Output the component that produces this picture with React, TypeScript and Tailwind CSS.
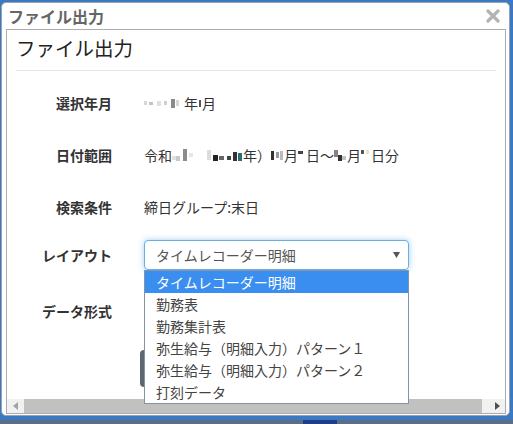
import React from "react";

const B = ({ cls }: { cls: string }) => <span className={"inline-block align-middle " + cls} />;

const items = [
  "タイムレコーダー明細",
  "勤務表",
  "勤務集計表",
  "弥生給与（明細入力）パターン１",
  "弥生給与（明細入力）パターン２",
  "打刻データ",
];

export default function App() {
  return (
    <div className="relative w-[513px] h-[424px] overflow-hidden bg-[#3d79c2] font-['Noto_Sans_CJK_JP','Noto_Sans',sans-serif]">
      {/* bottom darker strip */}
      <div className="absolute left-0 bottom-0 w-[513px] h-[4px] bg-[#5a6f86]">
        <div className="ml-[303px] w-[34px] h-[4px] bg-[#1f3f86]" />
      </div>
      {/* window */}
      <div className="absolute left-[1px] top-[2px] w-[509px] h-[414px] rounded-[5px] bg-white border border-[#9aa3ad] flex flex-col">
        {/* title bar */}
        <div className="h-[26px] flex items-center justify-between pl-[6px] pr-[9px]">
          <span className="text-[16px] font-bold text-[#666] leading-[20px]">ファイル出力</span>
          <svg width="14" height="14" viewBox="0 0 14 14">
            <path d="M2 2 L12 12 M12 2 L2 12" stroke="#b3b3b3" strokeWidth="3.2" strokeLinecap="round" />
          </svg>
        </div>
        {/* inner panel */}
        <div className="ml-[4px] mr-[3px] h-[385px] border border-[#acacac] flex flex-col">
          <div className="flex-1 relative">
            {/* header */}
            <div className="mx-[9px] pt-[5px] pb-[9px] border-b border-[#e5e5e5]">
              <div className="text-[19.5px] leading-[26px] text-[#222]">ファイル出力</div>
            </div>
            {/* body */}
            <div className="pt-[6px] text-[14px] text-[#333]">
              <div className="h-[52px] flex items-center">
                <div className="w-[105px] text-right font-bold">選択年月</div>
                <div className="ml-[32px] flex items-center">
                  <B cls="w-[3px] h-[4px] bg-[#d8d8d8] mr-[2px]" />
                  <B cls="w-[4px] h-[3px] bg-[#c4c4c4] mr-[4px]" />
                  <B cls="w-[4px] h-[5px] bg-[#e0e0e0] mr-[3px]" />
                  <B cls="w-[3px] h-[4px] bg-[#d0d0d0] mr-[4px]" />
                  <B cls="w-[4px] h-[9px] bg-[#8a8a8a] mr-[1px]" />
                  <B cls="w-[3px] h-[6px] bg-[#d6d6d6] mr-[5px]" />
                  <span>年</span>
                  <B cls="w-[2px] h-[7px] bg-[#555] mx-[1px]" />
                  <span>月</span>
                </div>
              </div>
              <div className="h-[52px] flex items-center">
                <div className="w-[105px] text-right font-bold">日付範囲</div>
                <div className="ml-[32px] flex items-center whitespace-nowrap">
                  <span>令和</span>
                  <B cls="w-[4px] h-[4px] bg-[#e0e0e0] mt-[6px]" />
                  <B cls="w-[4px] h-[5px] bg-[#c9c9c9] mt-[6px] mr-[3px]" />
                  <B cls="w-[4px] h-[12px] bg-[#8c8c8c] mr-[2px]" />
                  <B cls="w-[4px] h-[4px] bg-[#e6e6e6] mr-[14px]" />
                  <B cls="w-[4px] h-[10px] bg-[#dcdcdc] mr-[2px]" />
                  <B cls="w-[5px] h-[6px] bg-[#222] mt-[5px] mr-[1px]" />
                  <B cls="w-[5px] h-[4px] bg-[#666] mt-[6px] mr-[3px]" />
                  <B cls="w-[4px] h-[4px] bg-[#444] mt-[6px] mr-[2px]" />
                  <B cls="w-[4px] h-[9px] bg-[#333] mt-[2px] mr-[1px]" />
                  <B cls="w-[4px] h-[8px] bg-[#2d6e70] mt-[3px] mr-[1px]" />
                  <span>年）</span>
                  <B cls="w-[3px] h-[9px] bg-[#333] mr-[2px]" />
                  <B cls="w-[3px] h-[6px] bg-[#9a9a9a] mr-[1px]" />
                  <B cls="w-[3px] h-[9px] bg-[#bbb] mr-[1px]" />
                  <span>月</span>
                  <B cls="w-[5px] h-[3px] bg-[#444] mb-[6px] mr-[3px]" />
                  <span>日～</span>
                  <B cls="w-[4px] h-[7px] bg-[#8a7f86] mb-[3px]" />
                  <B cls="w-[4px] h-[6px] bg-[#3a3034] mt-[6px]" />
                  <B cls="w-[4px] h-[4px] bg-[#b9c6cf] mt-[6px] mr-[1px]" />
                  <span>月</span>
                  <B cls="w-[3px] h-[4px] bg-[#555] mb-[7px] mr-[2px]" />
                  <B cls="w-[3px] h-[4px] bg-[#e5e5c8] mb-[7px] mr-[2px]" />
                  <span>日分</span>
                </div>
              </div>
              <div className="h-[52px] flex items-center">
                <div className="w-[105px] text-right font-bold">検索条件</div>
                <div className="ml-[32px]">締日グループ:末日</div>
              </div>
              <div className="h-[44px] flex items-center">
                <div className="w-[105px] text-right font-bold">レイアウト</div>
                <div className="ml-[32px] relative">
                  <div className="w-[265px] h-[30px] rounded-[4px] border border-[#66afe9] shadow-[0_0_6px_rgba(102,175,233,0.6)] flex items-center justify-between pl-[11px] pr-[8px] text-[#555] bg-white">
                    <span>タイムレコーダー明細</span>
                    <svg width="7" height="6" viewBox="0 0 7 6">
                      <path d="M0 0 L7 0 L3.5 6 Z" fill="#555" />
                    </svg>
                  </div>
                  <div className="absolute left-0 top-[30px] w-[265px] z-10 bg-white border border-[#8593a8]">
                    {items.map((t, i) => (
                      <div
                        key={t}
                        className={
                          i === 0
                            ? "h-[22px] leading-[22px] pl-[11px] bg-[#3a8ef0] text-white whitespace-nowrap"
                            : "h-[22px] leading-[22px] pl-[11px] text-[#444] whitespace-nowrap"
                        }
                      >
                        {t}
                      </div>
                    ))}
                  </div>
                </div>
              </div>
              <div className="h-[68px] flex items-center">
                <div className="w-[105px] text-right font-bold">データ形式</div>
              </div>
              <div className="mt-[5px] pl-[133px]">
                <div className="w-[200px] h-[37px] rounded-[4px] bg-[#5d6773]" />
              </div>
            </div>
          </div>
          {/* horizontal scrollbar */}
          <div className="h-[14px] flex bg-[#f1f1f1]">
            <div className="w-[17px] flex items-center justify-center">
              <svg width="5" height="8" viewBox="0 0 5 8">
                <path d="M5 0 L5 8 L0 4 Z" fill="#a3a3a3" />
              </svg>
            </div>
            <div className="w-[458px] bg-[#c1c1c1]" />
            <div className="flex-1 flex items-center justify-end pr-[5px]">
              <svg width="5" height="8" viewBox="0 0 5 8">
                <path d="M0 0 L0 8 L5 4 Z" fill="#505050" />
              </svg>
            </div>
          </div>
        </div>
      </div>
    </div>
  );
}
